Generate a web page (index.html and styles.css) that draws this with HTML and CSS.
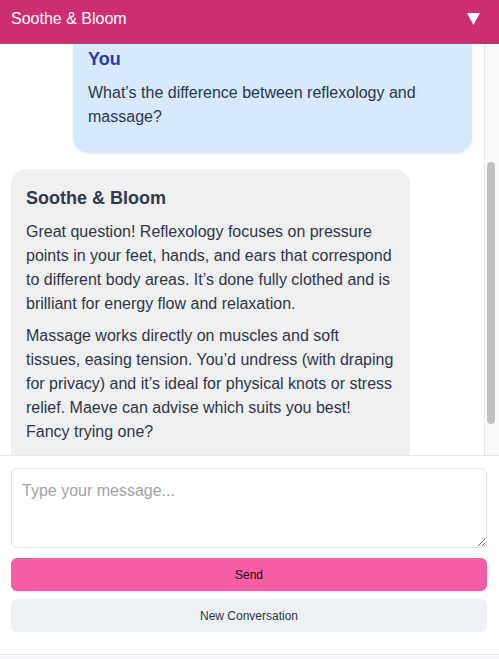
FILE: index.html
```html
<!DOCTYPE html>
<html lang="en">
<head>
<meta charset="utf-8">
<title>Soothe &amp; Bloom</title>
<link rel="stylesheet" href="styles.css">
</head>
<body>
<div class="app">
  <header class="header">
    <span class="brand">Soothe &amp; Bloom</span>
    <button class="toggle" aria-label="Collapse">
      <svg width="13" height="12" viewBox="0 0 13 12"><polygon points="0,0 13,0 6.5,12" fill="#ffffff"/></svg>
    </button>
  </header>
  <div class="chat">
    <main class="pane" id="chat">
      <div class="msg bot">
        <div class="who">Soothe &amp; Bloom</div>
        <p>Hello and welcome to Soothe &amp; Bloom! I’m here to help with treatments, bookings and any questions about our therapies.</p>
      </div>
      <div class="msg user" id="userMsg">
        <div class="who">You</div>
        <p>What’s the difference between reflexology and massage?</p>
      </div>
      <div class="msg bot">
        <div class="who">Soothe &amp; Bloom</div>
        <p>Great question! Reflexology focuses on pressure points in your feet, hands, and ears that correspond to different body areas. It’s done fully clothed and is brilliant for energy flow and relaxation.</p>
        <p>Massage works directly on muscles and soft tissues, easing tension. You’d undress (with draping for privacy) and it’s ideal for physical knots or stress relief. Maeve can advise which suits you best! Fancy trying one?</p>
      </div>
    </main>
    <div class="scrollbar" aria-hidden="true"><div class="thumb"></div></div>
  </div>
  <section class="composer">
    <textarea class="input" placeholder="Type your message..."></textarea>
    <button class="btn send">Send</button>
    <button class="btn reset">New Conversation</button>
  </section>
</div>
<script src="script.js"></script>
</body>
</html>
```

FILE: styles.css
```css
* { box-sizing: border-box; }
html, body { margin: 0; padding: 0; }
body {
  background: #f7f8fb;
  font-family: "Liberation Sans", Arial, Helvetica, sans-serif;
  color: #2d3748;
}
.app {
  height: 655px;
  display: flex;
  flex-direction: column;
  background: #ffffff;
  border-bottom: 1px solid #e3e7ee;
}
.header {
  height: 44px;
  flex: 0 0 44px;
  background: #cb2f6f;
  display: flex;
  justify-content: space-between;
  align-items: flex-start;
  padding: 9px 19px 0 11px;
}
.brand {
  color: #ffffff;
  font-size: 16px;
  line-height: 20px;
}
.toggle {
  background: none;
  border: 0;
  padding: 0;
  margin-top: 4px;
  line-height: 0;
  cursor: pointer;
}
.chat {
  flex: 1 1 auto;
  min-height: 0;
  display: flex;
  border-bottom: 1px solid #e5e7eb;
}
.pane {
  flex: 1 1 auto;
  min-width: 0;
  overflow: hidden;
  display: flex;
  flex-direction: column;
  gap: 16px;
  padding: 12px 12px 36px 11px;
}
.scrollbar {
  flex: 0 0 15px;
  background: #fafafa;
  border-left: 1px solid #e8e8e8;
  padding: 118px 0 0 2px;
}
.thumb {
  width: 8px;
  height: 262px;
  background: #c1c1c1;
  border-radius: 4px;
}
.msg {
  width: 399px;
  flex: 0 0 auto;
  border-radius: 16px;
  padding: 17px 14px 16px 15px;
}
.msg p {
  margin: 0 0 8px;
  font-size: 16px;
  line-height: 24px;
  color: #2d3748;
}
.who {
  font-weight: bold;
  font-size: 18px;
  line-height: 24px;
  margin-bottom: 10px;
}
.bot {
  align-self: flex-start;
  background: #f0f0f0;
}
.bot .who { color: #2d3a4f; }
.user {
  align-self: flex-end;
  background: #d6e9fd;
  box-shadow: 0 1px 3px rgba(0, 0, 0, 0.08);
}
.user .who { color: #283ca6; }
.composer {
  flex: 0 0 auto;
  display: flex;
  flex-direction: column;
  padding: 12px 12px 22px 11px;
}
.input {
  height: 80px;
  width: 100%;
  border: 1px solid #e2e5ea;
  border-radius: 6px;
  padding: 13px 10px;
  font-family: "Liberation Sans", Arial, sans-serif;
  font-size: 16px;
  color: #2d3748;
  resize: vertical;
  outline: none;
}
.input::placeholder { color: #a3a3a3; }
.btn {
  height: 33px;
  width: 100%;
  border: 0;
  border-radius: 6px;
  font-family: "Liberation Sans", Arial, sans-serif;
  font-size: 12px;
  cursor: pointer;
}
.send {
  margin-top: 10px;
  background: #f35ea4;
  color: #111111;
}
.reset {
  margin-top: 8px;
  background: #edf1f6;
  color: #2d3748;
}
```

FILE: script.js
```js
var chat = document.getElementById('chat');
var user = document.getElementById('userMsg');
chat.scrollTop = user.offsetTop - chat.offsetTop + 14;
```
